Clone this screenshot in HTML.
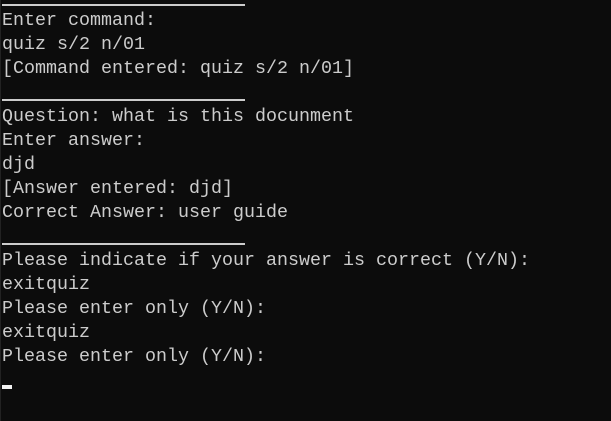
<!DOCTYPE html>
<html><head><style>
html,body{margin:0;padding:0;background:#0c0c0c;width:611px;height:421px;overflow:hidden;position:relative}
.t{position:absolute;left:2px;top:9px;font-family:"Liberation Mono",monospace;font-size:18.33px;line-height:24px;color:#cccccc;white-space:pre}
.r{position:absolute;left:2px;width:243px;height:2px;background:#cccccc}
.c{position:absolute;left:2px;top:385px;width:10px;height:4px;background:#f2f2f2}
.lb{position:absolute;left:0;top:0;width:1px;height:421px;background:#222}
</style></head><body>
<div class="lb"></div>
<div class="r" style="top:4px"></div>
<div class="r" style="top:99px"></div>
<div class="r" style="top:243px"></div>
<div class="t">Enter command:
quiz s/2 n/01
[Command entered: quiz s/2 n/01]

Question: what is this docunment
Enter answer:
djd
[Answer entered: djd]
Correct Answer: user guide

Please indicate if your answer is correct (Y/N):
exitquiz
Please enter only (Y/N):
exitquiz
Please enter only (Y/N):</div>
<div class="c"></div>
</body></html>
